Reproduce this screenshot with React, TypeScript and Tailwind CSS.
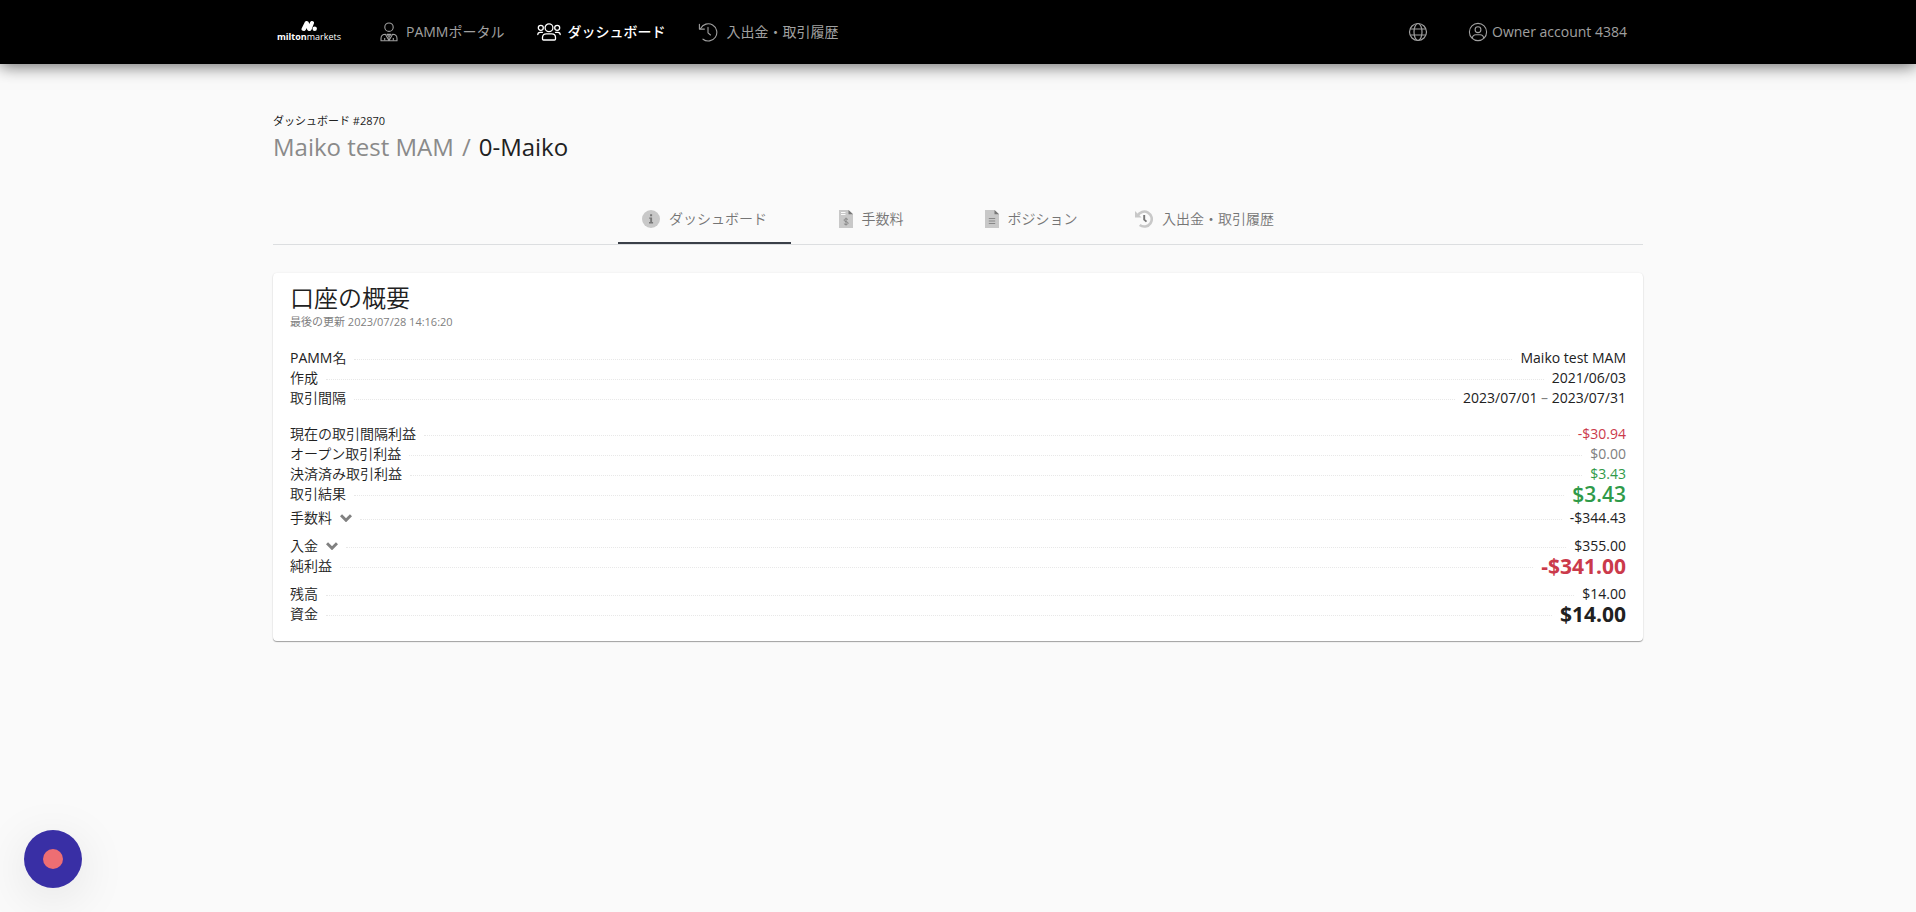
import { useState } from "react";
import type { ReactNode } from "react";

type Row = {
    prefix?: string;
    label: string;
    value: ReactNode;
    tone?: string;
    expandable?: boolean;
};

const PamIcon = () => (
    <svg viewBox="0 0 18 20" className="h-5 w-[18px]" fill="none" stroke="currentColor" strokeWidth="1.1" strokeLinejoin="round">
        <circle cx="9" cy="5.2" r="4.2" />
        <path d="M1 18.8v-2.3c0-2.6 1.9-4.3 4.4-4.3L9 18.6l3.6-6.4c2.5 0 4.4 1.7 4.4 4.3v2.3z" />
        <path d="M4.7 18.6v-2.5M13.3 18.6v-2.5M7 12.4h4l-2 2.3zM9 14.7v4" />
    </svg>
);

const UsersIcon = () => (
    <svg viewBox="0 0 24 18" className="h-[18px] w-6" fill="none" stroke="currentColor" strokeWidth="1.3" strokeLinecap="round" strokeLinejoin="round">
        <circle cx="12" cy="4.7" r="3.9" />
        <path d="M5.5 16v-1.5c0-2.3 1.6-3.7 3.7-3.7h5.6c2.1 0 3.7 1.4 3.7 3.7V16c0 .6-.5 1-1 1h-11c-.5 0-1-.4-1-1z" />
        <circle cx="3.8" cy="4.8" r="2.5" />
        <circle cx="20.2" cy="4.8" r="2.5" />
        <path d="M.8 11.6c0-1.6.9-2.3 2.3-2.3h2.4M23.2 11.6c0-1.6-.9-2.3-2.3-2.3h-2.4" />
    </svg>
);

const HistoryIcon = () => (
    <svg viewBox="0 0 20 20" className="size-5" fill="none" stroke="currentColor" strokeWidth="1.1" strokeLinecap="round" strokeLinejoin="round">
        <path d="M2.6 6.4A8.6 8.6 0 1 1 5 17.2" />
        <path d="M1.4 2.2v4.9h5M10 5.4v5.4l2.5 2.2" />
    </svg>
);

const GlobeIcon = () => (
    <svg viewBox="0 0 20 20" className="size-5" fill="none" stroke="currentColor" strokeWidth="1.2">
        <circle cx="10" cy="10" r="8.5" />
        <ellipse cx="10" cy="10" rx="4" ry="8.5" />
        <path d="M2.2 7h15.6M2.2 13h15.6" />
    </svg>
);

const UserIcon = () => (
    <svg viewBox="0 0 20 20" className="size-5" fill="none" stroke="currentColor" strokeWidth="1.1">
        <circle cx="10" cy="10" r="8.6" />
        <circle cx="10" cy="7.7" r="2.9" />
        <path d="M4.2 16.2c.4-2.3 1.7-3.5 3.6-3.5h4.4c1.9 0 3.2 1.2 3.6 3.5" />
    </svg>
);

const InfoIcon = () => (
    <svg viewBox="0 0 18 18" className="size-[18px]">
        <circle cx="9" cy="9" r="9" fill="#c8c8c8" />
        <path d="M7.2 7.5h2.9v4.6h1v1.3H7v-1.3h1.2V8.8h-1zM8.1 4.3h2v1.9h-2z" fill="#777" />
    </svg>
);

const FileIcon = ({ money = false }: { money?: boolean }) => (
    <svg viewBox="0 0 14 18" className="h-[18px] w-[14px]">
        <path d="M0 0h9.5L14 4.2V18H0z" fill="#c8c8c8" />
        <path d="M9.5 0L14 4.2H9.5z" fill="#777" />
        {money ? (
            <>
                <path d="M2 2.5h4.5M2 4.5h4.5" stroke="#fff" strokeWidth=".9" />
                <path d="M9 9.7c-.4-.7-1.2-.9-2-.9-1.1 0-1.9.5-1.9 1.4 0 2 4 .9 4 2.9 0 .9-.9 1.4-2.1 1.4-.9 0-1.7-.3-2.1-1M7 7.7v7.800" stroke="#888" fill="none" />
            </>
        ) : (
            <path d="M3.8 8.5h6.4M3.8 11h6.4M3.8 13.5h6.4" stroke="#888" />
        )}
    </svg>
);

const ClockIcon = () => (
    <svg viewBox="0 0 18 18" className="size-[18px]" fill="none">
        <path d="M2.5 5.8A7.5 7.5 0 1 1 4.7 15" stroke="#c8c8c8" strokeWidth="2.6" />
        <path d="M0 1v6.6h6.6z" fill="#c8c8c8" />
        <path d="M9.2 5v4.6l2.3 2" stroke="#777" strokeWidth="1.9" />
    </svg>
);

const navItems = [
    { label: "PAMMポータル", icon: <PamIcon />, style: "gap-2" },
    { label: "ダッシュボード", icon: <UsersIcon />, style: "gap-1.5 font-medium text-white" },
    { label: "入出金・取引履歴", icon: <HistoryIcon />, style: "gap-2" },
];

const tabs = [
    { label: "ダッシュボード", icon: <InfoIcon /> },
    { label: "手数料", icon: <FileIcon money /> },
    { label: "ポジション", icon: <FileIcon /> },
    { label: "入出金・取引履歴", icon: <ClockIcon /> },
];

const groups: { margin: string; rows: Row[] }[] = [
    {
        margin: "mt-[18px]",
        rows: [
            { prefix: "PAMM", label: "名", value: "Maiko test MAM" },
            { label: "作成", value: "2021/06/03" },
            {
                label: "取引間隔",
                value: <>2023/07/01 <span className="text-[#808080]">–</span> 2023/07/31</>,
            },
        ],
    },
    {
        margin: "mt-4",
        rows: [
            { label: "現在の取引間隔利益", value: "-$30.94", tone: "text-[#cb3a4b]" },
            { label: "オープン取引利益", value: "$0.00", tone: "text-[#808080]" },
            { label: "決済済み取引利益", value: "$3.43", tone: "text-[#2f9a48]" },
            { label: "取引結果", value: "$3.43", tone: "text-[21px] font-semibold text-[#2f9a48]" },
        ],
    },
    {
        margin: "mt-1",
        rows: [{ label: "手数料", value: "-$344.43", expandable: true }],
    },
    {
        margin: "mt-2",
        rows: [
            { label: "入金", value: "$355.00", expandable: true },
            { label: "純利益", value: "-$341.00", tone: "text-[21px] font-bold text-[#cb3a4b]" },
        ],
    },
    {
        margin: "mt-2",
        rows: [
            { label: "残高", value: "$14.00" },
            { label: "資金", value: "$14.00", tone: "text-[21px] font-bold" },
        ],
    },
];

function SummaryRow({ row }: { row: Row }) {
    return (
        <div className="flex h-5 items-center gap-2">
            <dt className="flex items-center gap-2 font-[350]">
                <span>
                    {row.prefix && <span className="font-normal">{row.prefix}</span>}
                    {row.label}
                </span>
                {row.expandable && (
                    <button type="button" aria-label={row.label} className="cursor-pointer">
                        <svg viewBox="0 0 12 8" className="h-2 w-3" fill="none" stroke="#808080" strokeWidth="3">
                            <path d="M1 1.2l5 5 5-5" />
                        </svg>
                    </button>
                )}
            </dt>
            <span className="mt-[3px] flex-1 border-b border-dotted border-[#e8e8e8]" />
            <dd className={row.tone}>{row.value}</dd>
        </div>
    );
}

export default function App() {
    const [activeTab, setActiveTab] = useState(0);

    return (
        <div
            lang="ja"
            className="min-h-screen bg-[#fafafa] font-['Open_Sans','Noto_Sans_CJK_JP',sans-serif] text-sm leading-5 text-[#212121]"
        >
            <header className="bg-black text-[#a0a0a0] shadow-[0_2px_16px_rgba(0,0,0,0.6)]">
                <div className="mx-auto flex h-16 max-w-[1400px] items-center px-[15px]">
                    <a href="#" className="ml-1 flex w-[64px] flex-col items-center text-white">
                        <svg viewBox="0 0 16 10" className="h-[10px] w-4" fill="currentColor">
                            <path d="M3.6 1.5C4 .5 4.7 0 5.6 0 6.9 0 7.7.8 8 2l.4.9.6-1.4C9.4.5 10.1 0 11 0c1.5 0 2.3 1 2 2.2L10.6 8.5C10.2 9.4 9.5 10 8.500 10 7.300 10 6.400 9.300 6 8.200L5.600 7.100 5 8.500C4.600 9.400 3.900 10 2.900 10 1 10 .1 8.800.6 7.500z" />
                            <circle cx="13.7" cy="7.8" r="2.2" />
                        </svg>
                        <span className="text-[9px] leading-3">
                            <b>milton</b>
                            <span>markets</span>
                        </span>
                    </a>

                    <nav className="ml-[39px] flex items-center gap-[33px]">
                        {navItems.map((item) => (
                            <a key={item.label} href="#" className={`flex items-center ${item.style}`}>
                                {item.icon}
                                {item.label}
                            </a>
                        ))}
                    </nav>

                    <div className="mr-4 ml-auto flex items-center gap-10">
                        <button type="button" aria-label="言語" className="cursor-pointer">
                            <GlobeIcon />
                        </button>
                        <button type="button" className="flex cursor-pointer items-center gap-1">
                            <UserIcon />
                            Owner account 4384
                        </button>
                    </div>
                </div>
            </header>

            <main className="mx-auto max-w-[1400px] px-[15px] pt-[49px]">
                <p className="text-[11px] leading-4">ダッシュボード #2870</p>
                <h1 className="flex gap-2 text-2xl leading-9">
                    <a href="#" className="text-[#8a8a8a]">Maiko test MAM</a>
                    <span className="text-[#8a8a8a]">/</span>
                    <span>0-Maiko</span>
                </h1>

                <div role="tablist" className="mt-8 flex h-12 justify-center border-b border-[#dcdee0]">
                    {tabs.map((tab, i) => (
                        <button
                            key={tab.label}
                            type="button"
                            role="tab"
                            aria-selected={activeTab === i}
                            onClick={() => setActiveTab(i)}
                            className={`flex min-w-[160px] cursor-pointer items-center justify-center gap-[9px] border-b-2 px-6 pb-0.5 font-[350] text-[#757575] ${
                                activeTab === i ? "border-[#3a3f48]" : "border-transparent"
                            }`}
                        >
                            {tab.icon}
                            {tab.label}
                        </button>
                    ))}
                </div>

                <section className="mt-7 rounded bg-white px-[17px] pt-[11px] pb-[17px] shadow-[0_1px_1px_rgba(0,0,0,0.35),0_0_2px_rgba(0,0,0,0.08)]">
                    <h2 className="text-2xl leading-7 font-[350]">口座の概要</h2>
                    <p className="mt-0.5 text-[11px] leading-4 text-[#808080]">
                        最後の更新 2023/07/28 14:16:20
                    </p>

                    {groups.map((group) => (
                        <dl key={group.rows[0].label} className={group.margin}>
                            {group.rows.map((row) => (
                                <SummaryRow key={row.label} row={row} />
                            ))}
                        </dl>
                    ))}
                </section>
            </main>

            {/* floating record button */}
            <button
                type="button"
                aria-label="Record"
                className="fixed bottom-6 left-6 flex size-[58px] cursor-pointer items-center justify-center rounded-full bg-[#392fa5] shadow-[0_10px_50px_rgba(0,0,0,0.1)]"
            >
                <span className="size-5 rounded-full bg-[#ee6e73]" />
            </button>
        </div>
    );
}
